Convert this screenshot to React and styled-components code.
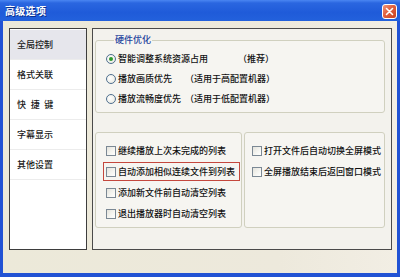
import React from "react";
import styled, { createGlobalStyle } from "styled-components";

const Global = createGlobalStyle`
  html, body { margin: 0; padding: 0; }
  body {
    width: 400px;
    height: 277px;
    overflow: hidden;
    font-family: "Noto Sans CJK SC", "Noto Sans", sans-serif;
  }
  * { box-sizing: border-box; }
`;

const Window = styled.div`
  width: 400px;
  height: 277px;
  display: flex;
  flex-direction: column;
  background: #2152d4;
`;

const TitleBar = styled.div`
  height: 21px;
  flex: none;
  display: flex;
  align-items: center;
  justify-content: space-between;
  padding: 0 3px 0 5px;
  background: linear-gradient(#4a86f2 0px, #2a66e0 3px, #1f5bd9 60%, #2361dc 100%);
`;

const Title = styled.span`
  color: #fff;
  font-size: 10px;
  font-weight: 700;
  line-height: 12px;
  text-shadow: 1px 1px 0 #0b2f8c;
  letter-spacing: 0.3px;
`;

const CloseButton = styled.div`
  width: 15px;
  height: 15px;
  margin-top: 1px;
  border: 1px solid #fff;
  border-radius: 3px;
  background: linear-gradient(135deg, #f0957a 0%, #e0603f 45%, #c8421f 100%);
  display: flex;
  align-items: center;
  justify-content: center;
`;

const Frame = styled.div`
  flex: 1;
  padding: 0 3px 4px 3px;
  display: flex;
`;

const Body = styled.div`
  flex: 1;
  display: flex;
  align-items: flex-start;
  gap: 5px;
  padding: 7px 5px 0 6px;
  background: linear-gradient(90deg, #ece9d9 0%, #ede9dc 70%, #f2eee4 100%);
`;

const Sidebar = styled.div`
  width: 78px;
  height: 222px;
  border: 1px solid #3d3d3d;
  background: #fff;
  padding-top: 1px;
  display: flex;
  flex-direction: column;
`;

const NavItem = styled.div`
  height: 30px;
  display: flex;
  align-items: center;
  padding-left: 7px;
  font-size: 9px;
  font-weight: 500;
  line-height: 12px;
  color: #1a1a1a;
  border-bottom: 1px solid #ececec;
  background: ${(p) => (p.$active ? "#e6e6ec" : "#fff")};
  word-spacing: ${(p) => (p.$spaced ? "2.6px" : "0")};
  white-space: pre;
`;

const Panel = styled.div`
  width: 300px;
  height: 222px;
  border: 1px solid #4a4a4a;
  background: #f3f2ed;
  padding: 5px 6px 0 2px;
  display: flex;
  flex-direction: column;
`;

const GroupBox = styled.fieldset`
  margin: 0;
  padding: 3px 0 3px 10px;
  border: 1px solid #d0d0bf;
  border-radius: 3px;
  background: #f6f5f1;
  display: flex;
  flex-direction: column;
`;

const Legend = styled.legend`
  margin-left: 8px;
  padding: 0 1px;
  font-size: 9px;
  font-weight: 500;
  line-height: 12px;
  color: #27459e;
`;

const RadioRow = styled.div`
  height: 20px;
  display: flex;
  align-items: center;
  font-size: 9px;
  font-weight: 500;
  line-height: 12px;
  color: #111;
`;

const Radio = styled.span`
  width: 10px;
  height: 10px;
  border-radius: 50%;
  border: 1px solid #4f6f8f;
  background: radial-gradient(circle at 40% 40%, #ffffff 0%, #f0f0ea 60%, #d8d8d0 100%);
  display: flex;
  align-items: center;
  justify-content: center;
  margin-right: 2px;
  flex: none;
  &::after {
    content: "";
    width: 4px;
    height: 4px;
    border-radius: 50%;
    background: ${(p) => (p.$checked ? "#2c9a2c" : "transparent")};
  }
`;

const Label = styled.span`
  width: ${(p) => p.$width}px;
  flex: none;
  white-space: nowrap;
`;

const Note = styled.span`
  white-space: nowrap;
`;

const BoxRow = styled.div`
  margin-top: 19px;
  display: flex;
  gap: 2px;
`;

const OptionBox = styled.div`
  width: ${(p) => p.$width}px;
  height: 96px;
  border: 1px solid #d0d0bf;
  border-radius: 3px;
  background: #f6f5f1;
  padding: 8px 1px 0 ${(p) => p.$inset}px;
  display: flex;
  flex-direction: column;
  gap: 2px;
`;

const CheckRow = styled.div`
  height: 19px;
  display: flex;
  align-items: center;
  padding-left: 2px;
  border: 1px solid ${(p) => (p.$marked ? "#c4473d" : "transparent")};
  font-size: 9px;
  font-weight: 500;
  line-height: 12px;
  color: #111;
  white-space: nowrap;
`;

const Check = styled.span`
  width: 10px;
  height: 10px;
  flex: none;
  border: 1px solid #7b8894;
  background: linear-gradient(135deg, #e4e3dc 0%, #f6f6f2 60%, #ffffff 100%);
  margin-right: 2px;
`;

const CloseIcon = () => (
  <svg width="9" height="9" viewBox="0 0 9 9">
    <path d="M1.5 1.5 L7.5 7.5 M7.5 1.5 L1.5 7.5" stroke="#fff" strokeWidth="1.6" strokeLinecap="round" />
  </svg>
);

const navItems = ["全局控制", "格式关联", "快 捷 键", "字幕显示", "其他设置"];

const radios = [
  { label: "智能调整系统资源占用", note: "（推荐）", width: 120, checked: true },
  { label: "播放画质优先", note: "（适用于高配置机器）", width: 67 },
  { label: "播放流畅度优先", note: "（适用于低配置机器）", width: 67 },
];

const leftChecks = [
  "继续播放上次未完成的列表",
  "自动添加相似连续文件到列表",
  "添加新文件前自动清空列表",
  "退出播放器时自动清空列表",
];

const rightChecks = ["打开文件后自动切换全屏模式", "全屏播放结束后返回窗口模式"];

export default function App() {
  return (
    <>
      <Global />
      <Window>
        <TitleBar>
          <Title>高级选项</Title>
          <CloseButton>
            <CloseIcon />
          </CloseButton>
        </TitleBar>
        <Frame>
          <Body>
            <Sidebar>
              {navItems.map((t, i) => (
                <NavItem key={t} $active={i === 0} $spaced={t.includes(" ")}>
                  {t}
                </NavItem>
              ))}
            </Sidebar>
            <Panel>
              <GroupBox>
                <Legend>硬件优化</Legend>
                {radios.map((r) => (
                  <RadioRow key={r.label}>
                    <Radio $checked={r.checked} />
                    <Label $width={r.width}>{r.label}</Label>
                    <Note>{r.note}</Note>
                  </RadioRow>
                ))}
              </GroupBox>
              <BoxRow>
                <OptionBox $width={147} $inset={7}>
                  {leftChecks.map((t, i) => (
                    <CheckRow key={t} $marked={i === 1}>
                      <Check />
                      {t}
                    </CheckRow>
                  ))}
                </OptionBox>
                <OptionBox $width={141} $inset={4}>
                  {rightChecks.map((t) => (
                    <CheckRow key={t}>
                      <Check />
                      {t}
                    </CheckRow>
                  ))}
                </OptionBox>
              </BoxRow>
            </Panel>
          </Body>
        </Frame>
      </Window>
    </>
  );
}
